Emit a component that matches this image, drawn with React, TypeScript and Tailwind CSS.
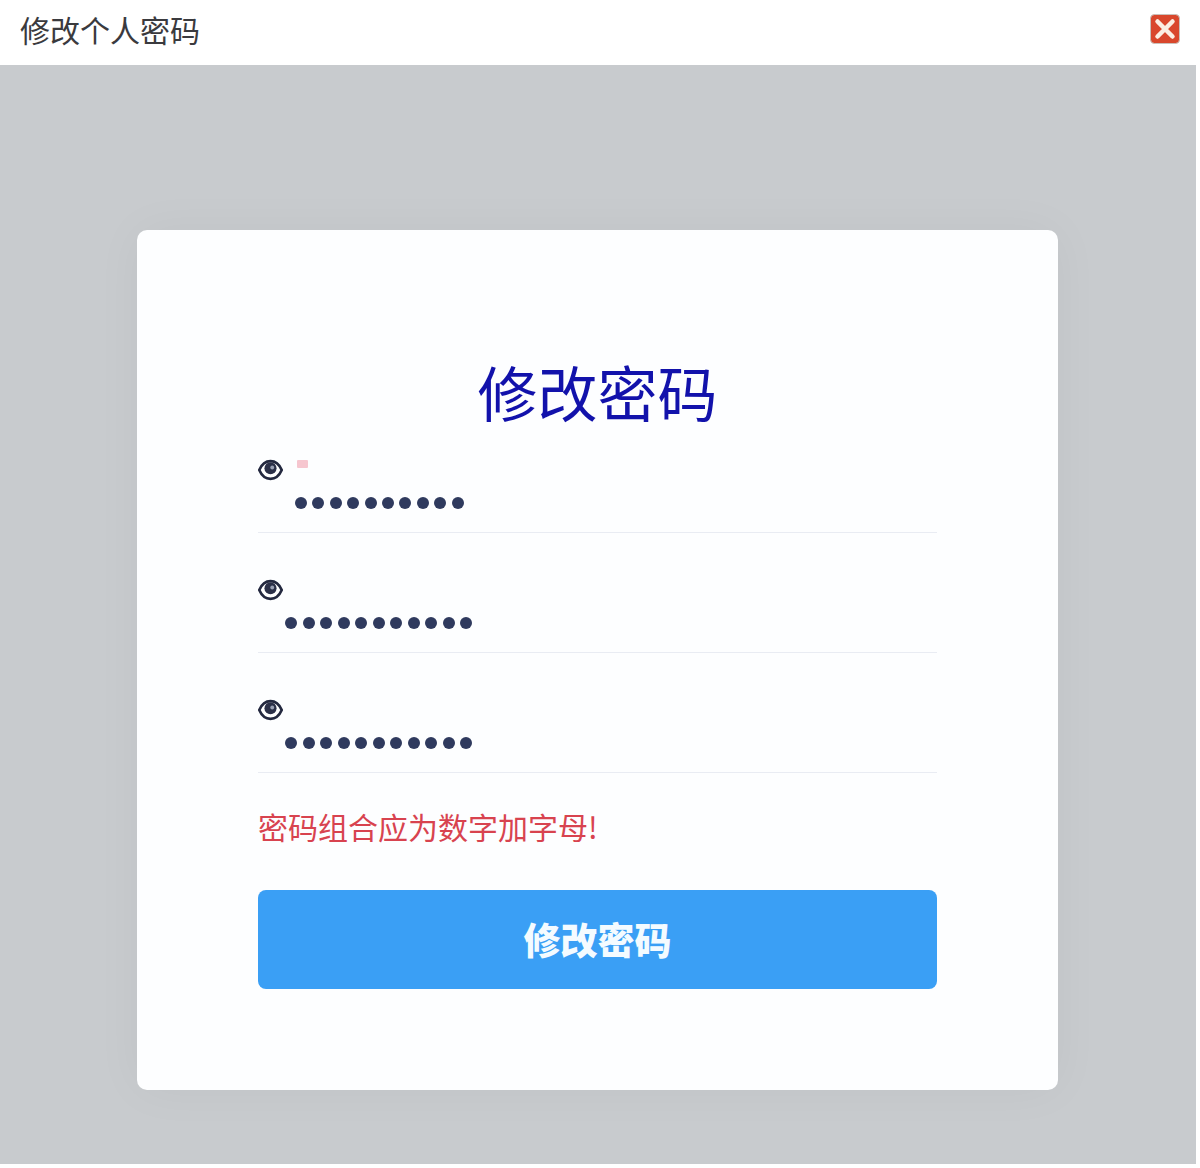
const fontStack = { fontFamily: '"Noto Sans CJK SC", "Noto Sans", sans-serif' };

function EyeIcon() {
  return (
    <svg width="25" height="24" viewBox="0 0 26 24" aria-hidden="true">
      <path
        d="M1.300 12C4 5.800 8.300 2.800 13 2.800S22 5.800 24.700 12C22 18.200 17.700 21.200 13 21.200S4 18.200 1.300 12Z"
        fill="#fff"
        stroke="#23283f"
        strokeWidth="2.800"
      />
      <circle cx="13" cy="10.200" r="6.300" fill="#2b3048" />
      <circle cx="14.800" cy="9.400" r="2" fill="#9aa1b4" />
    </svg>
  );
}

function CloseIcon() {
  return (
    <svg width="30" height="30" viewBox="0 0 30 30" aria-hidden="true">
      <rect x="0.500" y="0.500" width="29" height="29" rx="4" fill="#d9472c" stroke="#c9c1bb" />
      <path d="M7.500 7.500 22.500 22.500M22.500 7.500 7.500 22.500" stroke="#fbeee2" strokeWidth="4.500" strokeLinecap="round" />
    </svg>
  );
}

function PasswordField({ dots, marked }: { dots: number; marked?: boolean }) {
  return (
    <div className="h-[100px] border-b border-[#e9ecf3] pt-[25px]">
      <div className="flex h-6 items-start">
        <EyeIcon />
        {marked && <span className="mt-[2px] ml-[14px] h-[8px] w-[11px] rounded-[1px] bg-[#f6c6cf]" />}
      </div>
      <div className={`mt-[15px] flex h-[12px] items-center ${marked ? 'gap-[5.400px] pl-[37px]' : 'gap-[5.500px] pl-[27px]'}`}>
        {Array.from({ length: dots }).map((_, i) => (
          <span key={i} className="h-3 w-3 rounded-full bg-[#2f3a5e]" />
        ))}
      </div>
    </div>
  );
}

export default function App() {
  return (
    <div className="h-[1168px] w-[1200px] bg-white" style={fontStack}>
      <div className="flex h-[65px] w-[1196px] items-center justify-between pr-[16px] pb-[8px] pl-[20px]">
        <span className="text-[30px] leading-[50px] font-normal text-[#3a3a3e]">修改个人密码</span>
        <CloseIcon />
      </div>
      <div className="h-[1099px] w-[1196px] bg-[#c8cbce] pt-[165px] pl-[137px]">
        <div className="h-[860px] w-[921px] rounded-[10px] bg-[#fdfeff] px-[121px] pt-[123px] shadow-[0_0_50px_rgba(0,0,0,0.04)]">
          <h1 className="mb-[4px] text-center text-[60px] leading-[76px] font-normal text-[#1212ab]">修改密码</h1>
          <PasswordField dots={10} marked />
          <div className="mt-5">
            <PasswordField dots={11} />
          </div>
          <div className="mt-5">
            <PasswordField dots={11} />
          </div>
          <p className="mt-[33px] text-[30px] leading-[40px] text-[#d8434f]">密码组合应为数字加字母!</p>
          <button className="mt-[44px] h-[99px] w-full rounded-[8px] bg-[#3a9ff5] text-[37px] font-black text-[#f4fbff]">
            修改密码
          </button>
        </div>
      </div>
    </div>
  );
}
